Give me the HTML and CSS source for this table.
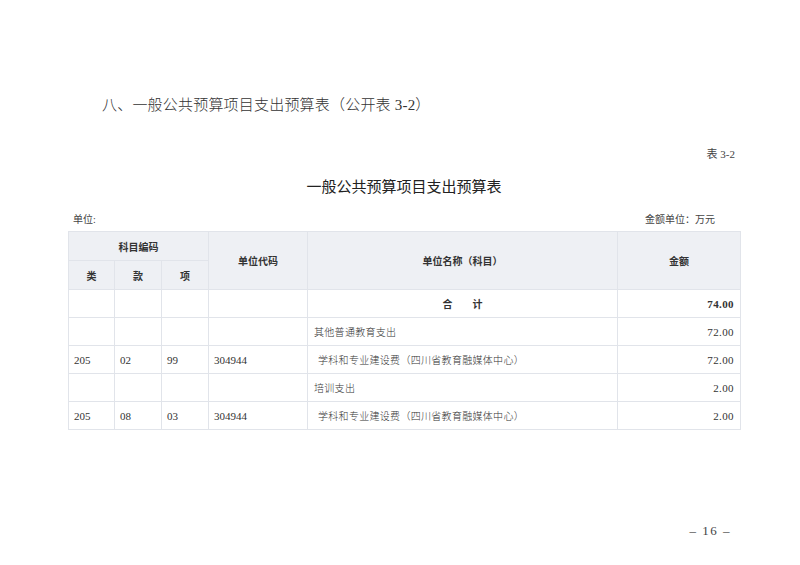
FILE: index.html
```html
<!DOCTYPE html>
<html lang="zh-CN">
<head>
<meta charset="utf-8">
<title>一般公共预算项目支出预算表</title>
<link rel="stylesheet" href="styles.css">
</head>
<body>
<div class="page">
  <div class="sheet">
    <h2 class="section-title">八、一般公共预算项目支出预算表（公开表 3-2）</h2>
    <div class="table-no">表 3-2</div>
    <h1 class="table-title">一般公共预算项目支出预算表</h1>
    <div class="units">
      <span>单位:</span>
      <span class="units-right">金额单位：万元</span>
    </div>
    <table class="budget">
      <colgroup>
        <col class="c1"><col class="c2"><col class="c3"><col class="c4"><col class="c5"><col class="c6">
      </colgroup>
      <thead>
        <tr class="h1">
          <th colspan="3">科目编码</th>
          <th rowspan="2">单位代码</th>
          <th rowspan="2">单位名称（科目）</th>
          <th rowspan="2">金额</th>
        </tr>
        <tr class="h2">
          <th>类</th><th>款</th><th>项</th>
        </tr>
      </thead>
      <tbody>
        <tr>
          <td></td><td></td><td></td><td></td>
          <td class="total">合&emsp;&emsp;计</td>
          <td class="num bold">74.00</td>
        </tr>
        <tr>
          <td></td><td></td><td></td><td></td>
          <td class="name">其他普通教育支出</td>
          <td class="num">72.00</td>
        </tr>
        <tr>
          <td>205</td><td>02</td><td>99</td><td>304944</td>
          <td class="name sub">学科和专业建设费（四川省教育融媒体中心）</td>
          <td class="num">72.00</td>
        </tr>
        <tr>
          <td></td><td></td><td></td><td></td>
          <td class="name">培训支出</td>
          <td class="num">2.00</td>
        </tr>
        <tr>
          <td>205</td><td>08</td><td>03</td><td>304944</td>
          <td class="name sub">学科和专业建设费（四川省教育融媒体中心）</td>
          <td class="num">2.00</td>
        </tr>
      </tbody>
    </table>
    <div class="page-no">– 16 –</div>
  </div>
</div>
</body>
</html>
```
FILE: styles.css
```css
html, body {
  margin: 0;
  padding: 0;
  background: #ffffff;
}

body {
  font-family: "Liberation Serif", "Noto Sans CJK SC", serif;
  color: #333333;
}

.page {
  width: 800px;
  height: 565px;
  overflow: hidden;
}

.sheet {
  width: 672px;
  margin-left: 68px;
  padding-top: 95px;
  display: flex;
  flex-direction: column;
}

.section-title {
  margin: 0 0 0 34px;
  font-size: 15px;
  line-height: 20px;
  font-weight: 300;
  color: #333333;
  letter-spacing: 0.2px;
}

.table-no {
  margin-top: 31px;
  align-self: flex-end;
  padding-right: 5px;
  font-size: 11px;
  line-height: 16px;
  color: #444444;
}

.table-title {
  margin: 15px 0 0 0;
  text-align: center;
  font-size: 15px;
  line-height: 20px;
  font-weight: 400;
  color: #222222;
}

.units {
  margin-top: 15px;
  display: flex;
  justify-content: space-between;
  padding: 0 25px 0 5px;
  font-size: 10px;
  line-height: 16px;
  color: #444444;
}

.budget {
  margin-top: 3px;
  width: 672px;
  border-collapse: collapse;
  table-layout: fixed;
  font-size: 10px;
}

.c1 { width: 46px; }
.c2 { width: 47px; }
.c3 { width: 47px; }
.c4 { width: 99px; }
.c5 { width: 310px; }
.c6 { width: 123px; }

.budget th,
.budget td {
  border: 1px solid #e1e4ea;
  padding: 0 5px;
  color: #333333;
}

.budget th {
  background: #eef0f4;
  font-weight: 700;
  text-align: center;
  font-size: 10px;
  color: #333333;
}

.budget tr.h1 th { height: 28px; }
.budget tr.h2 th { height: 28px; }

.budget td {
  height: 27px;
  font-size: 11px;
  text-align: left;
  font-weight: 300;
}

.budget td.name {
  font-size: 10px;
  padding-left: 6px;
  letter-spacing: 0.3px;
}

.budget td.sub {
  padding-left: 10px;
}

.budget td.total {
  text-align: center;
  font-size: 10px;
  font-weight: 700;
}

.budget td.num {
  text-align: right;
  padding-right: 6px;
  letter-spacing: 0.4px;
}

.budget td.bold {
  font-weight: 700;
}

.page-no {
  margin-top: 93px;
  align-self: flex-end;
  padding-right: 9px;
  font-size: 13px;
  line-height: 16px;
  letter-spacing: 1.5px;
  color: #444444;
}
```
